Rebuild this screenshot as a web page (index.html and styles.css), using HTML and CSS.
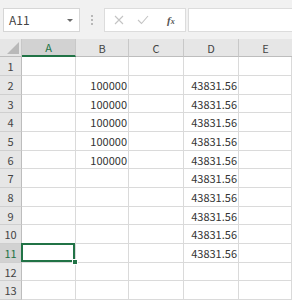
FILE: index.html
```html
<!DOCTYPE html>
<html>
<head>
<meta charset="utf-8">
<link rel="stylesheet" href="styles.css">
</head>
<body>
<div class="app">
  <div class="toolbar">
    <div class="namebox">
      <span class="name">A11</span>
      <span class="caret"></span>
    </div>
    <div class="grip"><i></i><i></i><i></i></div>
    <div class="buttons">
      <svg class="btn" width="10" height="10" viewBox="0 0 10 10"><path d="M1 1 L9 9 M9 1 L1 9" stroke="#c4c4c4" stroke-width="1.1" fill="none"/></svg>
      <svg class="btn" width="12" height="10" viewBox="0 0 12 10"><path d="M1 5 L4.5 8.5 L11 1" stroke="#c4c4c4" stroke-width="1.1" fill="none"/></svg>
      <span class="fx">f<span class="x">x</span></span>
    </div>
    <div class="formula"></div>
  </div>
  <div class="sheet">
    <div class="corner"><span class="tri"></span></div>
    <div class="ch sel">A</div>
    <div class="ch">B</div>
    <div class="ch">C</div>
    <div class="ch">D</div>
    <div class="ch last">E</div>

    <div class="rh">1</div><div class="c"></div><div class="c"></div><div class="c"></div><div class="c"></div><div class="c"></div>
    <div class="rh">2</div><div class="c"></div><div class="c n">100000</div><div class="c"></div><div class="c n">43831.56</div><div class="c"></div>
    <div class="rh">3</div><div class="c"></div><div class="c n">100000</div><div class="c"></div><div class="c n">43831.56</div><div class="c"></div>
    <div class="rh">4</div><div class="c"></div><div class="c n">100000</div><div class="c"></div><div class="c n">43831.56</div><div class="c"></div>
    <div class="rh">5</div><div class="c"></div><div class="c n">100000</div><div class="c"></div><div class="c n">43831.56</div><div class="c"></div>
    <div class="rh">6</div><div class="c"></div><div class="c n">100000</div><div class="c"></div><div class="c n">43831.56</div><div class="c"></div>
    <div class="rh">7</div><div class="c"></div><div class="c"></div><div class="c"></div><div class="c n">43831.56</div><div class="c"></div>
    <div class="rh">8</div><div class="c"></div><div class="c"></div><div class="c"></div><div class="c n">43831.56</div><div class="c"></div>
    <div class="rh">9</div><div class="c"></div><div class="c"></div><div class="c"></div><div class="c n">43831.56</div><div class="c"></div>
    <div class="rh">10</div><div class="c"></div><div class="c"></div><div class="c"></div><div class="c n">43831.56</div><div class="c"></div>
    <div class="rh sel">11</div><div class="c active"><span class="frame"></span><span class="handle"></span></div><div class="c"></div><div class="c"></div><div class="c n">43831.56</div><div class="c"></div>
    <div class="rh">12</div><div class="c"></div><div class="c"></div><div class="c"></div><div class="c"></div><div class="c"></div>
    <div class="rh">13</div><div class="c"></div><div class="c"></div><div class="c"></div><div class="c"></div><div class="c"></div>
  </div>
</div>
</body>
</html>
```

FILE: styles.css
```css
html, body {
  margin: 0;
  padding: 0;
  background: #ffffff;
}
.app {
  width: 292px;
  height: 300px;
  overflow: hidden;
  background: #f1f1f1;
  font-family: "Noto Sans CJK JP", "Noto Sans", sans-serif;
}
.toolbar {
  display: flex;
  align-items: flex-start;
  padding: 8px 0 0 3px;
  height: 31px;
  box-sizing: border-box;
}
.namebox {
  width: 77px;
  height: 24px;
  box-sizing: border-box;
  background: #fff;
  border: 1px solid #d6d6d6;
  display: flex;
  align-items: center;
  padding-left: 5px;
  position: relative;
}
.name {
  font-family: "Noto Sans CJK JP", sans-serif;
  font-size: 12px;
  color: #444;
  line-height: 1;
}
.caret {
  position: absolute;
  right: 6px;
  top: 10px;
  width: 0;
  height: 0;
  border-left: 3px solid transparent;
  border-right: 3px solid transparent;
  border-top: 3px solid #6a6a6a;
}
.grip {
  width: 24px;
  height: 24px;
  display: flex;
  flex-direction: column;
  align-items: center;
  justify-content: center;
  gap: 2px;
}
.grip i {
  display: block;
  width: 2px;
  height: 2px;
  background: #b8b8b8;
}
.buttons {
  width: 82px;
  height: 24px;
  box-sizing: border-box;
  background: #fff;
  border: 1px solid #dcdcdc;
  display: flex;
  align-items: center;
  padding-left: 9px;
  gap: 13px;
}
.fx {
  font-family: "Liberation Serif", serif;
  font-style: italic;
  font-weight: bold;
  font-size: 11px;
  color: #555;
  margin-left: 5px;
}
.fx .x {
  font-size: 8px;
}
.formula {
  flex: 1;
  margin-left: 2px;
  height: 24px;
  box-sizing: border-box;
  background: #fff;
  border: 1px solid #dcdcdc;
  border-right: none;
}
.sheet {
  margin-top: 8px;
  display: grid;
  grid-template-columns: 22px 54px 53px 55px 55px 1fr;
  grid-template-rows: 18px 19px 19px 18px 19px 19px 18px 19px 19px 18px 19px 19px 18px 19px;
  background: #fff;
}
.corner {
  background: #e6e6e6;
  border-right: 1px solid #c8c8c8;
  border-bottom: 1px solid #bdbdbd;
  position: relative;
}
.tri {
  position: absolute;
  right: 2px;
  bottom: 2px;
  width: 0;
  height: 0;
  border-left: 12px solid transparent;
  border-bottom: 12px solid #b9b9b9;
}
.ch {
  background: #e6e6e6;
  border-right: 1px solid #c8c8c8;
  border-bottom: 1px solid #bdbdbd;
  font-size: 11px;
  color: #444;
  display: flex;
  align-items: center;
  justify-content: center;
  font-family: "Noto Sans CJK JP", sans-serif;
}
.ch.last {
  border-right: none;
}
.ch.sel {
  background: #d2d2d2;
  color: #217346;
  border-bottom: 2px solid #217346;
}
.rh {
  background: #e6e6e6;
  border-right: 1px solid #bdbdbd;
  border-bottom: 1px solid #cfcfcf;
  font-size: 11px;
  color: #444;
  display: flex;
  align-items: center;
  justify-content: center;
}
.rh.sel {
  background: #d2d2d2;
  color: #217346;
}
.c {
  border-right: 1px solid #dadada;
  border-bottom: 1px solid #dadada;
  font-size: 11px;
  color: #333;
  display: flex;
  align-items: center;
  justify-content: flex-end;
  padding-right: 1px;
  position: relative;
}
.c.active {
  z-index: 2;
}
.frame {
  position: absolute;
  left: -1px;
  top: -1px;
  right: 0;
  bottom: 0;
  border: 2px solid #217346;
}
.handle {
  position: absolute;
  right: -3px;
  bottom: -3px;
  width: 6px;
  height: 6px;
  background: #217346;
  border: 1px solid #fff;
  box-sizing: border-box;
}
```
